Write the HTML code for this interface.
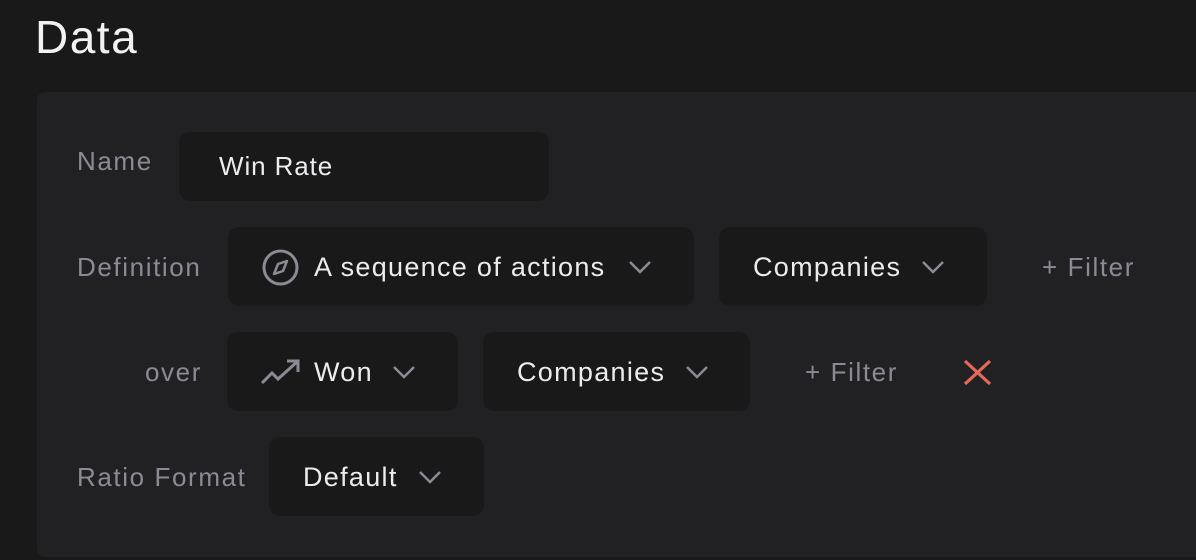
<!DOCTYPE html>
<html><head><style>
body{margin:0;width:1196px;height:560px;background:#19191a;overflow:hidden;font-family:"Liberation Sans",sans-serif;position:relative}
.a{position:absolute}
.panel{left:37px;top:92px;width:1180px;height:465px;background:#212124;border-radius:8px}
.box{background:#19191a;border-radius:11px}
.t{position:absolute;font-size:27px;line-height:30px;color:#ececef;white-space:nowrap;letter-spacing:1.3px}
.l{color:#8b8b96;font-size:26px;letter-spacing:1.6px}
svg{position:absolute}
</style></head><body>
<div class="t" style="left:35px;top:10px;font-size:46px;line-height:54px;color:#f2f2f2;letter-spacing:1.5px">Data</div>
<div class="a panel"></div>
<div class="t l" style="left:77px;top:146px">Name</div>
<div class="a box" style="left:179px;top:132px;width:370px;height:69px"></div>
<div class="t" style="left:219px;top:151px;font-size:26px;letter-spacing:0.9px">Win Rate</div>

<div class="t l" style="left:77px;top:252px">Definition</div>
<div class="a box" style="left:228px;top:227px;width:466px;height:79px"></div>
<svg style="left:262px;top:249px" width="37" height="37" viewBox="0 0 37 37"><circle cx="18.5" cy="18.5" r="16.5" fill="none" stroke="#8b8b96" stroke-width="3"/><path d="M25 12 L21 22 L12 25 L16 15 Z" fill="none" stroke="#8b8b96" stroke-width="2.5" stroke-linejoin="round"/></svg>
<div class="t" style="left:314px;top:252px">A sequence of actions</div>
<svg style="left:628px;top:260px" width="24" height="14"><path d="M2 2 L12 12 L22 2" fill="none" stroke="#8b8b96" stroke-width="2.5"/></svg>
<div class="a box" style="left:719px;top:227px;width:268px;height:79px"></div>
<div class="t" style="left:753px;top:252px">Companies</div>
<svg style="left:921px;top:260px" width="24" height="14"><path d="M2 2 L12 12 L22 2" fill="none" stroke="#8b8b96" stroke-width="2.5"/></svg>
<div class="t l" style="left:1042px;top:252px">+ Filter</div>

<div class="t l" style="left:145px;top:357px">over</div>
<div class="a box" style="left:227px;top:332px;width:231px;height:79px"></div>
<svg style="left:260px;top:358px" width="42" height="28"><path d="M2 25 L12 15 L18 21 L38 3 M27 3 L38 3 L38 14" fill="none" stroke="#8b8b96" stroke-width="3"/></svg>
<div class="t" style="left:314px;top:357px">Won</div>
<svg style="left:392px;top:365px" width="24" height="14"><path d="M2 2 L12 12 L22 2" fill="none" stroke="#8b8b96" stroke-width="2.5"/></svg>
<div class="a box" style="left:483px;top:332px;width:267px;height:79px"></div>
<div class="t" style="left:517px;top:357px">Companies</div>
<svg style="left:685px;top:365px" width="24" height="14"><path d="M2 2 L12 12 L22 2" fill="none" stroke="#8b8b96" stroke-width="2.5"/></svg>
<div class="t l" style="left:805px;top:357px">+ Filter</div>
<svg style="left:963px;top:359px" width="29" height="27"><path d="M2 2 L27 25 M27 2 L2 25" stroke="#e5685a" stroke-width="3.2"/></svg>

<div class="t l" style="left:77px;top:462px">Ratio Format</div>
<div class="a box" style="left:269px;top:437px;width:215px;height:79px"></div>
<div class="t" style="left:303px;top:462px">Default</div>
<svg style="left:418px;top:470px" width="24" height="14"><path d="M2 2 L12 12 L22 2" fill="none" stroke="#8b8b96" stroke-width="2.5"/></svg>
</body></html>
